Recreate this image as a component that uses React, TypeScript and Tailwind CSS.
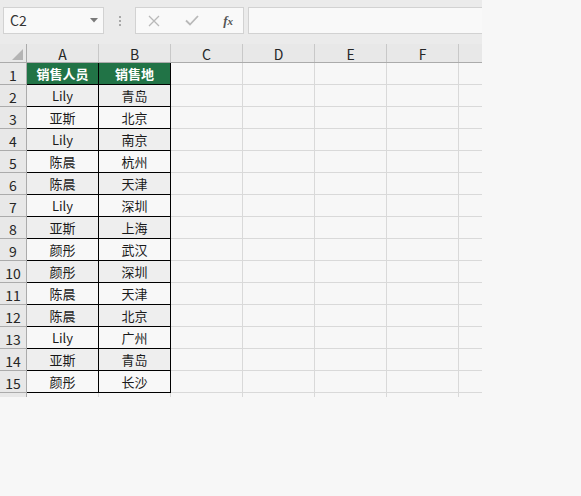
import React from 'react';

const rows: [string, string][] = [
  ['Lily', '青岛'],
  ['亚斯', '北京'],
  ['Lily', '南京'],
  ['陈晨', '杭州'],
  ['陈晨', '天津'],
  ['Lily', '深圳'],
  ['亚斯', '上海'],
  ['颜彤', '武汉'],
  ['颜彤', '深圳'],
  ['陈晨', '天津'],
  ['陈晨', '北京'],
  ['Lily', '广州'],
  ['亚斯', '青岛'],
  ['颜彤', '长沙'],
];

const cols = ['A', 'B', 'C', 'D', 'E', 'F'];
const font = { fontFamily: '"Noto Sans CJK SC", "Noto Sans", sans-serif' };

const Toolbar: React.FC = () => (
  <div className="h-[44px] bg-[#ebebeb] pt-[7px] flex items-start">
    {/* name box */}
    <div className="ml-[3px] w-[101px] h-[27px] bg-[#f9f9f9] border border-[#d2d2d2] flex items-center justify-between pl-[6px] pr-[5px]">
      <span className="text-[14px] text-[#333]">C2</span>
      <svg width="8" height="5" viewBox="0 0 8 5"><path d="M0 0h8L4 4.5z" fill="#7a7a7a" /></svg>
    </div>
    <div className="w-[31px] h-[27px] flex flex-col items-center justify-center gap-[2px]">
      <span className="w-[2px] h-[2px] bg-[#a8a8a8]" />
      <span className="w-[2px] h-[2px] bg-[#a8a8a8]" />
      <span className="w-[2px] h-[2px] bg-[#a8a8a8]" />
    </div>
    {/* cancel / enter / fx */}
    <div className="w-[109px] h-[27px] bg-[#f9f9f9] border border-[#d2d2d2] flex items-center pl-[12px] pr-[10px] justify-between">
      <svg width="12" height="12" viewBox="0 0 12 12">
        <path d="M1 1l10 10M11 1L1 11" stroke="#b9b9b9" strokeWidth="1.3" />
      </svg>
      <svg width="14" height="11" viewBox="0 0 14 11">
        <path d="M1 5.5l4 4L13 1" stroke="#b9b9b9" strokeWidth="1.8" fill="none" />
      </svg>
      <span className="text-[13px] italic text-[#555] font-semibold" style={{ fontFamily: '"Liberation Serif", serif' }}>
        f<span className="text-[11px]">x</span>
      </span>
    </div>
    <div className="ml-[4px] w-[234px] h-[27px] bg-[#f9f9f9] border-y border-l border-[#d2d2d2]" />
  </div>
);

const App: React.FC = () => {
  return (
    <div className="w-[581px] h-[496px] bg-[#f7f7f7]" style={font}>
      <div className="w-[482px]">
        <Toolbar />
        {/* column headers */}
        <div className="flex h-[19px] bg-[#e8e8e8] border-b border-[#ababab]">
          <div className="w-[27px] border-r border-[#ababab] flex items-end justify-end pr-[3px] pb-[2px]">
            <svg width="11" height="11" viewBox="0 0 11 11"><path d="M11 0v11H0z" fill="#b4b4b4" /></svg>
          </div>
          {cols.map(c => (
            <div key={c} className="w-[72px] border-r border-[#c8c8c8] flex items-center justify-center text-[14px] text-[#262626] leading-none pt-[1px]">
              {c}
            </div>
          ))}
          <div className="flex-1" />
        </div>

        {/* header row 1 */}
        <div className="flex h-[22px]">
          <div className="w-[27px] bg-[#e8e8e8] border-r border-b border-[#ababab] flex items-end justify-center text-[14px] text-[#262626] leading-none pb-[2px]">1</div>
          <div className="w-[72px] bg-[#217346] border-r border-b border-black flex items-center justify-center text-white font-bold text-[13px]">销售人员</div>
          <div className="w-[72px] bg-[#217346] border-r border-b border-black flex items-center justify-center text-white font-bold text-[13px]">销售地</div>
          {[0, 1, 2, 3].map(i => (
            <div key={i} className="w-[72px] bg-[#f7f7f7] border-r border-b border-[#d9d9d9]" />
          ))}
          <div className="flex-1 bg-[#f7f7f7] border-b border-[#d9d9d9]" />
        </div>

        {rows.map(([name, city], i) => {
          const n = i + 2;
          const shade = n % 2 === 0 ? 'bg-[#eeeeee]' : 'bg-[#f8f8f8]';
          return (
            <div key={n} className="flex h-[22px]">
              <div className="w-[27px] bg-[#e8e8e8] border-r border-b border-[#ababab] flex items-end justify-center text-[14px] text-[#262626] leading-none pb-[2px]">
                {n}
              </div>
              <div className={`w-[72px] ${shade} border-r border-b border-black flex items-center justify-center text-[13px] text-[#1a1a1a]`}>{name}</div>
              <div className={`w-[72px] ${shade} border-r border-b border-black flex items-center justify-center text-[13px] text-[#1a1a1a]`}>{city}</div>
              {[0, 1, 2, 3].map(k => (
                <div key={k} className="w-[72px] bg-[#f7f7f7] border-r border-b border-[#d9d9d9]" />
              ))}
              <div className="flex-1 bg-[#f7f7f7] border-b border-[#d9d9d9]" />
            </div>
          );
        })}

        {/* partial row 16 */}
        <div className="flex h-[4px]">
          <div className="w-[27px] bg-[#e8e8e8] border-r border-[#ababab]" />
          {cols.map(c => (
            <div key={c} className="w-[72px] border-r border-[#d9d9d9]" />
          ))}
        </div>
      </div>
    </div>
  );
};

export default App;
